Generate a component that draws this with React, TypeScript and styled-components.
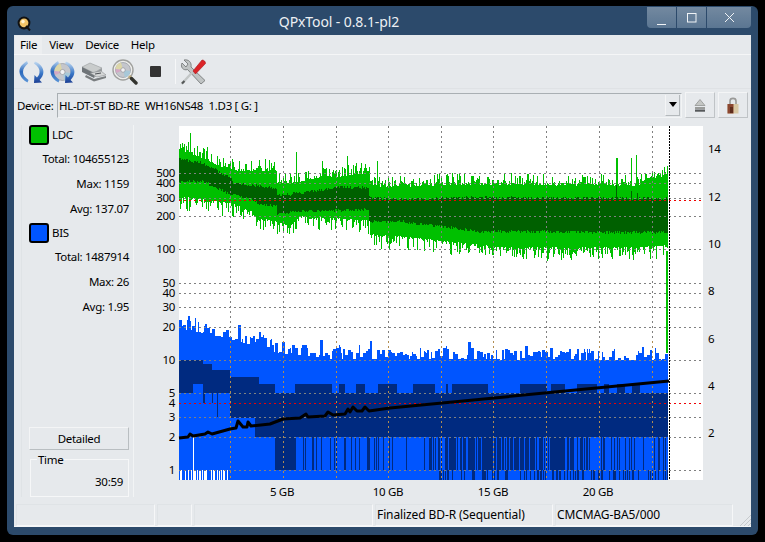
import styled, { createGlobalStyle } from "styled-components";

const GlobalStyle = createGlobalStyle`
  html, body {
    margin: 0;
    padding: 0;
    background: #000;
  }
  #root {
    width: 765px;
    height: 542px;
    overflow: hidden;
  }
`;

const UI_FONT = `"Noto Sans", "Open Sans", "Liberation Sans", sans-serif`;

// seeded random so every photo looks the same
function makeRandom(seed: number) {
  let s = seed;
  return () => {
    s = (s * 16807) % 2147483647;
    return s / 2147483647;
  };
}

type Pt = [number, number];

function lerp(points: Pt[], x: number) {
  for (let i = 1; i < points.length; i++) {
    if (x <= points[i][0]) {
      const [x0, y0] = points[i - 1];
      const [x1, y1] = points[i];
      return y0 + ((y1 - y0) * (x - x0)) / Math.max(x1 - x0, 1);
    }
  }
  return points[points.length - 1][1];
}

const CHART_LEFT = 179;
const CHART_RIGHT = 703;
const CHART_TOP = 125;
const CHART_BOTTOM = 479;
const DATA_END = 668;

const greenTop: Pt[] = [[179, 146], [230, 168], [276, 168], [277, 180], [296, 180], [320, 175], [350, 173], [369, 170], [370, 184], [400, 184], [450, 182], [640, 183], [646, 175], [668, 175]];
const greenBottom: Pt[] = [[179, 196], [230, 203], [250, 210], [257, 218], [276, 221], [290, 226], [296, 216], [369, 220], [370, 234], [400, 236], [500, 247], [640, 247], [668, 245]];
const darkTop: Pt[] = [[179, 159], [203, 164], [230, 178], [233, 183], [276, 189], [277, 196], [296, 194], [336, 188], [368, 188], [369, 198], [400, 200], [480, 198], [668, 199]];
const darkBottom: Pt[] = [[179, 179], [203, 179], [230, 192], [250, 196], [257, 201], [276, 204], [277, 212], [296, 209], [368, 207], [369, 219], [400, 219], [480, 229], [668, 230]];
const blueTop: Pt[] = [[179, 327], [230, 338], [276, 352], [330, 358], [668, 359]];
const burnLine: Pt[] = [[179, 437], [188, 436], [190, 433], [193, 435], [205, 433], [208, 431], [212, 433], [230, 428], [236, 427], [238, 420], [243, 426], [247, 426], [248, 421], [251, 425], [270, 423], [283, 418], [300, 417], [303, 415], [306, 413], [308, 416], [325, 415], [328, 411], [333, 414], [345, 413], [348, 408], [350, 411], [353, 406], [357, 410], [362, 410], [365, 406], [369, 410], [390, 407], [669, 380]];

const ldcSpikes: Pt[] = [[190, 132], [207, 146], [296, 151], [322, 160], [347, 155], [377, 160], [616, 157], [617, 157], [631, 157], [636, 154]];

const leftTicks: { label: string; y: number }[] = [
  { label: "500", y: 172 }, { label: "400", y: 182 }, { label: "300", y: 197 }, { label: "200", y: 215 },
  { label: "100", y: 248 }, { label: "50", y: 282 }, { label: "40", y: 292 }, { label: "30", y: 306 },
  { label: "20", y: 326 }, { label: "10", y: 359 }, { label: "5", y: 392 }, { label: "4", y: 402 },
  { label: "3", y: 416 }, { label: "2", y: 436 }, { label: "1", y: 469 },
];
const rightTicks = [
  { label: "14", y: 148 }, { label: "12", y: 196 }, { label: "10", y: 243 }, { label: "8", y: 290 },
  { label: "6", y: 338 }, { label: "4", y: 385 }, { label: "2", y: 432 },
];
const gridX = [230, 283, 336, 388, 441, 493, 546, 599, 652];
const bottomTicks = [
  { label: "5 GB", x: 282 }, { label: "10 GB", x: 388 }, { label: "15 GB", x: 493 }, { label: "20 GB", x: 598 },
];

function buildChart() {
  const rnd = makeRandom(4711);
  let bright = "";
  let dark = "";
  let blue = "";
  let navy = "";
  let white = "";

  const bar = (x: number, y0: number, y1: number) => `M${x + 0.5} ${Math.round(y0)}V${Math.round(y1)}`;

  let blueHold = 0;
  let blueValue = 0;
  let gapHold = 0;
  let gapOn = false;

  for (let x = CHART_LEFT; x < DATA_END; x++) {
    const gt = lerp(greenTop, x) - Math.pow(rnd(), 2) * 12 + 2;
    const gb = lerp(greenBottom, x) + Math.pow(rnd(), 2.5) * 14 - 1;
    bright += bar(x, gt, gb);
    dark += bar(x, lerp(darkTop, x) - rnd() * 3, lerp(darkBottom, x) + rnd() * 3);

    // histogram look of the BIS tops, bars are 1-3 px wide
    if (blueHold <= 0) {
      blueHold = 1 + Math.floor(rnd() * 3);
      const r = rnd();
      blueValue = lerp(blueTop, x) - (r > 0.22 ? rnd() * 12 : 0) - (r > 0.9 ? 4 + rnd() * 6 : 0);
    }
    blueHold--;
    blue += bar(x, blueValue, CHART_BOTTOM);

    // stepped dark bands of the BIS graph
    if (gapHold <= 0) {
      gapOn = rnd() > 0.65;
      gapHold = 2 + Math.floor(rnd() * 7);
    }
    gapHold--;

    if (x < 203) {
      navy += bar(x, 359, gapOn && x > 192 ? 383 : 392);
    } else if (x < 230) {
      navy += bar(x, x < 212 ? 363 : 369, x === 203 || x === 204 || x === 212 ? 402 : x === 217 ? 416 : 392);
    } else if (x < 255) {
      navy += bar(x, 376, 417);
    } else if (x < 259) {
      navy += bar(x, 376, 436);
    } else if (x < 275) {
      navy += bar(x, 383, 436);
    } else if (x < 295) {
      navy += bar(x, 392, 469);
    } else {
      navy += bar(x, gapOn || x > 640 ? 392 : 383, 436);
    }

    // stripes under the 2 line
    if (x >= 295) {
      const density = x < 430 ? 0.14 : x < 590 ? 0.74 : 0.25;
      if (rnd() < density) navy += bar(x, 436, 469);
      if (x > 430 && rnd() < 0.3) navy += bar(x, 469, 479);
    }

    // white gaps at the very start
    if (x < 228 && rnd() > 0.55) white += bar(x, 469, 479);
  }
  white += bar(193, 436, 479);

  for (const [x, y] of ldcSpikes) bright += bar(x, y, 190);
  dark += bar(616, 184, 200) + bar(631, 190, 200) + bar(637, 192, 200);

  const line = burnLine.map(([x, y], i) => `${i === 0 ? "M" : "L"}${x} ${y}`).join("");

  return { bright, dark, blue, navy, white, line };
}

const chart = buildChart();

function DiscGlyph({ cx, cy, r }: { cx: number; cy: number; r: number }) {
  return (
    <g>
      <circle cx={cx} cy={cy} r={r} fill="#c4c6cc" stroke="#94989f" strokeWidth="0.7" />
      <path d={`M${cx} ${cy}L${cx - r} ${cy - 1}A${r} ${r} 0 0 1 ${cx - 2} ${cy - r}Z`} fill="#dcd6a8" />
      <path d={`M${cx} ${cy}L${cx - r + 1} ${cy + 3}A${r} ${r} 0 0 1 ${cx - r} ${cy - 1}Z`} fill="#d4a8c4" />
      <path d={`M${cx} ${cy}L${cx + r} ${cy + 1}A${r} ${r} 0 0 1 ${cx + 2} ${cy + r}Z`} fill="#a8c8d8" />
      <circle cx={cx} cy={cy} r={r * 0.3} fill="#f2f2f4" stroke="#8a8a90" strokeWidth="0.6" />
    </g>
  );
}

function RefreshArcs() {
  return (
    <>
      <defs>
        <linearGradient id="arcLeft" x1="0" y1="0" x2="0" y2="1">
          <stop offset="0" stopColor="#b4d2f0" />
          <stop offset="0.5" stopColor="#2a68bc" />
          <stop offset="1" stopColor="#5c96d8" />
        </linearGradient>
        <linearGradient id="arcRight" x1="0" y1="0" x2="0" y2="1">
          <stop offset="0" stopColor="#c4dcf2" />
          <stop offset="0.55" stopColor="#3a78c8" />
          <stop offset="1" stopColor="#1c3f94" />
        </linearGradient>
      </defs>
      <path d="M8 1C2.5 4.5 0 8 0.5 12C1 16.5 4 20 8.5 22.5L9.5 20C6 17.5 4 15 4 12C4 8.5 6 6 9 3.5Z" fill="url(#arcLeft)" />
      <path d="M16 1.5L15 3.5C19 6 21 9 20.5 12.5C20.3 14.5 19.4 16 18 17.4L15.5 15L15 23L23 22.5L20.6 20C23 17.5 24.3 15 24.4 12C24.5 7.5 21 3.5 16 1.5Z" fill="url(#arcRight)" />
    </>
  );
}

function RefreshIcon() {
  return (
    <svg width="26" height="24" viewBox="0 0 26 24">
      <RefreshArcs />
    </svg>
  );
}

function DiscRefreshIcon() {
  return (
    <svg width="26" height="24" viewBox="0 0 26 24">
      <DiscGlyph cx={12.5} cy={12} r={8.5} />
      <RefreshArcs />
    </svg>
  );
}

function DriveIcon() {
  return (
    <svg width="26" height="20" viewBox="0 0 26 20">
      <path d="M1 5L9 1L21 6L13 11Z" fill="#c9cccc" stroke="#8a8e90" strokeWidth="0.5" />
      <path d="M1 5L13 11L13 16L1 10Z" fill="#6e7478" />
      <path d="M13 11L21 6L21 9L13 16Z" fill="#9a9ea0" />
      <path d="M9 11L20 9L25 13L16 15Z" fill="#d4d6d6" stroke="#7d8184" strokeWidth="0.5" />
      <path d="M5 13L13 17L25 14L25 16L13 19.5L4 15Z" fill="#7a7e80" />
      <path d="M14 12L20 11" stroke="#4c5054" strokeWidth="1" />
    </svg>
  );
}

function MagnifierIcon() {
  return (
    <svg width="26" height="26" viewBox="0 0 26 26">
      <circle cx="11" cy="11" r="10" fill="#ededeb" stroke="#a0a19e" strokeWidth="1.4" />
      <DiscGlyph cx={11} cy={11} r={7.5} />
      <path d="M17 17L20 20" stroke="#b8a678" strokeWidth="3" />
      <path d="M19.5 19.5L24 24" stroke="#33342f" strokeWidth="3.4" strokeLinecap="round" />
    </svg>
  );
}

function ToolsIcon() {
  return (
    <svg width="26" height="26" viewBox="0 0 26 26">
      <path d="M4 1L8 5L6 8L2 4C0 8 3.5 12 7.5 10.5L21 25L25 21.5L11 8C12 3.5 8.5 0 4 1Z" fill="#c0c4c4" stroke="#6c7070" strokeWidth="0.8" />
      <path d="M1.5 25L13.5 12" stroke="#c2c6c6" strokeWidth="2.4" />
      <path d="M2 24.5L4.5 22" stroke="#555858" strokeWidth="2.2" />
      <path d="M13 12L15.5 15L25.5 4.5C25.5 2.5 24 1 22 1Z" fill="#dc2428" stroke="#a81418" strokeWidth="0.6" />
    </svg>
  );
}

function EjectIcon() {
  return (
    <svg width="12" height="13" viewBox="0 0 12 13">
      <path d="M6 0.5L11 6.5L1 6.5Z" fill="#c4c6c4" stroke="#8a8c8a" strokeWidth="0.7" />
      <rect x="1" y="8" width="10" height="2" fill="#9a9c9a" />
      <rect x="1" y="10.5" width="10" height="2.2" fill="#55585a" />
    </svg>
  );
}

function LockIcon() {
  return (
    <svg width="12" height="17" viewBox="0 0 12 17">
      <path d="M3 7V4C3 0.5 9 0.5 9 4V7" fill="none" stroke="#9a9a98" strokeWidth="1.6" />
      <rect x="0.5" y="7" width="11" height="9.5" fill="#d8c8a4" />
      <rect x="0.5" y="7" width="6" height="9.5" fill="#8a4630" />
      <rect x="3" y="10" width="3" height="6" fill="#5e2c1c" />
    </svg>
  );
}

function App() {
  return (
    <>
      <GlobalStyle />
      <Desktop>
        <Window>
          <TitleBar>
            <AppIcon viewBox="0 0 14 15">
              <circle cx="7" cy="7" r="6.4" fill="#111" />
              <circle cx="7" cy="6.8" r="4.4" fill="#f2c468" />
              <circle cx="6" cy="5.6" r="1.8" fill="#fff3d0" />
              <path d="M9 10L13 14.5" stroke="#111" strokeWidth="2" />
            </AppIcon>
            <Title>QPxTool - 0.8.1-pl2</Title>
            <WindowButtons>
              <WindowButton $width={29}>
                <svg width="11" height="14" viewBox="0 0 11 14"><path d="M1 13.5H10" stroke="#f0f3f6" /></svg>
              </WindowButton>
              <WindowButton $width={29}>
                <svg width="10" height="10" viewBox="0 0 10 10"><rect x="0.5" y="0.5" width="8.5" height="8.5" fill="none" stroke="#f0f3f6" /></svg>
              </WindowButton>
              <WindowButton $width={44}>
                <svg width="11" height="11" viewBox="0 0 11 11"><path d="M1 1L10 10M10 1L1 10" stroke="#f0f3f6" /></svg>
              </WindowButton>
            </WindowButtons>
          </TitleBar>

          <Client>
            <MenuBar>
              <MenuItem $hot>File</MenuItem>
              <MenuItem>View</MenuItem>
              <MenuItem>Device</MenuItem>
              <MenuItem>Help</MenuItem>
            </MenuBar>

            <ToolBar>
              <ToolButton><RefreshIcon /></ToolButton>
              <ToolButton><DiscRefreshIcon /></ToolButton>
              <ToolButton><DriveIcon /></ToolButton>
              <ToolButton><MagnifierIcon /></ToolButton>
              <ToolButton><StopSquare /></ToolButton>
              <ToolSeparator />
              <ToolButton><ToolsIcon /></ToolButton>
            </ToolBar>

            <DeviceRow>
              <DeviceLabel>Device:</DeviceLabel>
              <DeviceCombo>
                <ComboText>HL-DT-ST BD-RE&nbsp; WH16NS48&nbsp; 1.D3 [ G: ]</ComboText>
                <ComboArrow><ArrowDown /></ComboArrow>
              </DeviceCombo>
              <SquareButton><EjectIcon /></SquareButton>
              <SquareButton><LockIcon /></SquareButton>
            </DeviceRow>

            <MainArea>
              <SidePanel>
                <LegendRow>
                  <Swatch $color="#00c000" />
                  <span>LDC</span>
                </LegendRow>
                <StatRow $first>Total: 104655123</StatRow>
                <StatRow>Max: 1159</StatRow>
                <StatRow>Avg: 137.07</StatRow>
                <LegendRow $second>
                  <Swatch $color="#0055ff" />
                  <span>BIS</span>
                </LegendRow>
                <StatRow $first>Total: 1487914</StatRow>
                <StatRow>Max: 26</StatRow>
                <StatRow>Avg: 1.95</StatRow>
                <PanelSpacer />
                <DetailedButton>Detailed</DetailedButton>
                <TimeBox>
                  <TimeLegend>Time</TimeLegend>
                  <TimeValue>30:59</TimeValue>
                </TimeBox>
              </SidePanel>

              <ChartSvg viewBox="136 124 600 376" width="600" height="376">
                <rect x={CHART_LEFT} y={CHART_TOP} width={CHART_RIGHT - CHART_LEFT} height={CHART_BOTTOM - CHART_TOP} fill="#fff" />
                <g shapeRendering="crispEdges" strokeWidth="1" fill="none">
                  <path d={chart.bright} stroke="#00c000" />
                  <path d={chart.dark} stroke="#006000" />
                  <path d={chart.blue} stroke="#0055ff" />
                  <path d={chart.navy} stroke="#002a80" />
                  <path d={chart.white} stroke="#fff" />
                  <path d={`M${DATA_END - 1.5} 250V352`} stroke="#00c000" strokeWidth="2" />
                  {leftTicks.filter((t) => t.y !== 402).map((t) => (
                    <path key={t.label} d={`M${CHART_LEFT} ${t.y + 0.5}H${CHART_RIGHT}`} stroke="#808080" strokeDasharray="2 3" />
                  ))}
                  {gridX.map((x) => (
                    <g key={x}>
                      <path d={`M${x + 0.5} ${CHART_TOP}V340`} stroke="#808080" strokeDasharray="2 3" />
                      <path d={`M${x + 0.5} 340V${CHART_BOTTOM}`} stroke="#b08c50" strokeDasharray="2 3" />
                    </g>
                  ))}
                  <path d={`M${CHART_LEFT} 199.5H${CHART_RIGHT}`} stroke="#f00000" strokeDasharray="2 3" />
                  <path d={`M${CHART_LEFT} 402.5H${CHART_RIGHT}`} stroke="#f00000" strokeDasharray="2 3" />
                  <path d={`M${DATA_END + 1.5} ${CHART_TOP}V${CHART_BOTTOM}`} stroke="#000" strokeDasharray="2 1" />
                </g>
                <path d={chart.line} fill="none" stroke="#000" strokeWidth="3" strokeLinejoin="round" />
                {leftTicks.map((t) => (
                  <AxisText key={t.label} x={175} y={t.y + 4} textAnchor="end">{t.label}</AxisText>
                ))}
                {rightTicks.map((t) => (
                  <AxisText key={t.label} x={708} y={t.y + 4}>{t.label}</AxisText>
                ))}
                {bottomTicks.map((t) => (
                  <AxisText key={t.label} x={t.x} y={495} textAnchor="middle">{t.label}</AxisText>
                ))}
              </ChartSvg>
            </MainArea>

            <StatusBar>
              <StatusCell $width={139} />
              <StatusCell $width={35} />
              <StatusCell $width={179} />
              <StatusCell $width={178}>Finalized BD-R (Sequential)</StatusCell>
              <StatusCell $width={178}>CMCMAG-BA5/000</StatusCell>
              <Grip viewBox="0 0 12 12" width="12" height="12">
                <path d="M12 1L1 12M12 5L5 12M12 9L9 12" stroke="#c6cacd" strokeWidth="1" />
              </Grip>
            </StatusBar>
          </Client>
        </Window>
      </Desktop>
    </>
  );
}

export default App;

const Desktop = styled.div`
  width: 765px;
  height: 542px;
  background: #000;
  padding: 6px 7px 7px 7px;
  box-sizing: border-box;
`;

const Window = styled.div`
  height: 100%;
  display: flex;
  flex-direction: column;
  background: #2c4a6b;
  border-radius: 6px;
  padding: 0 7px 8px 7px;
  box-sizing: border-box;
  font-family: ${UI_FONT};
  font-size: 11.5px;
  letter-spacing: -0.3px;
  color: #000;
`;

// title bar
const TitleBar = styled.div`
  position: relative;
  height: 29px;
  flex: none;
  display: flex;
  align-items: flex-start;
`;

const AppIcon = styled.svg`
  width: 14px;
  height: 15px;
  margin: 10px 0 0 3px;
  flex: none;
`;

const Title = styled.div`
  flex: 1;
  text-align: center;
  color: #ecf0f4;
  font-size: 14px;
  letter-spacing: -0.1px;
  line-height: 18px;
  margin-top: 7px;
  padding-right: 104px;
`;

const WindowButtons = styled.div`
  position: absolute;
  top: 1px;
  right: 0;
  display: flex;
  height: 21px;
  gap: 1px;
  background: #2c4a6b;
  border-radius: 0 0 4px 4px;
  overflow: hidden;
`;

const WindowButton = styled.div<{ $width: number }>`
  width: ${(p) => p.$width}px;
  display: flex;
  align-items: center;
  justify-content: center;
  background: linear-gradient(#7389a0, #5b7692);
`;

// client area
const Client = styled.div`
  flex: 1;
  min-height: 0;
  display: flex;
  flex-direction: column;
  background: #e6e9ec;
  border-bottom: 1px solid #f6f7f8;
`;

const MenuBar = styled.div`
  height: 19px;
  flex: none;
  display: flex;
  align-items: center;
  border-bottom: 1px solid #f5f6f7;
  padding-left: 1px;
  box-sizing: content-box;
`;

const MenuItem = styled.div<{ $hot?: boolean }>`
  height: 18px;
  line-height: 18px;
  padding: 0 5px 0 5px;
  margin-right: 2px;
  background: ${(p) => (p.$hot ? "#eceef0" : "transparent")};
`;

const ToolBar = styled.div`
  height: 33px;
  flex: none;
  display: flex;
  align-items: center;
  padding-left: 2px;
  border-bottom: 1px solid #dfe2e5;
`;

const ToolButton = styled.div`
  width: 31px;
  height: 28px;
  display: flex;
  align-items: center;
  justify-content: center;
`;

const StopSquare = styled.div`
  width: 11px;
  height: 11px;
  background: #333;
  border-radius: 1px;
`;

const ToolSeparator = styled.div`
  width: 1px;
  height: 25px;
  margin: 0 1px 0 4px;
  background: #f6f7f8;
`;

const DeviceRow = styled.div`
  height: 29px;
  flex: none;
  display: flex;
  align-items: center;
  padding: 3px 3px 0 3px;
  box-sizing: border-box;
`;

const DeviceLabel = styled.div`
  width: 40px;
  flex: none;
`;

const DeviceCombo = styled.div`
  flex: 1;
  height: 25px;
  display: flex;
  align-items: center;
  justify-content: space-between;
  box-sizing: border-box;
  border: 1px solid #a9afb3;
  border-right-color: #f2f4f5;
  border-bottom-color: #f2f4f5;
  padding: 0 1px 0 1px;
`;

const ComboText = styled.div`
  white-space: nowrap;
`;

const ComboArrow = styled.div`
  width: 15px;
  height: 21px;
  box-sizing: border-box;
  border-right: 1px solid #b4b9bc;
  border-bottom: 1px solid #b4b9bc;
  border-left: 1px solid #f4f5f6;
  display: flex;
  align-items: center;
  justify-content: center;
`;

const ArrowDown = styled.div`
  width: 0;
  height: 0;
  border-left: 4px solid transparent;
  border-right: 4px solid transparent;
  border-top: 5px solid #000;
`;

const SquareButton = styled.div`
  width: 30px;
  height: 26px;
  margin-left: 3px;
  flex: none;
  display: flex;
  align-items: center;
  justify-content: center;
  box-sizing: border-box;
  border: 1px solid #f4f5f6;
  border-right-color: #bfc3c6;
  border-bottom-color: #bfc3c6;
`;

const MainArea = styled.div`
  flex: 1;
  min-height: 0;
  display: flex;
  align-items: flex-start;
  padding: 7px 0 0 7px;
`;

const SidePanel = styled.div`
  width: 113px;
  height: 372px;
  flex: none;
  box-sizing: border-box;
  border-left: 1px solid #dfe3e6;
  border-right: 1px solid #f2f4f5;
  padding: 0 4px 0 7px;
  display: flex;
  flex-direction: column;
`;

const LegendRow = styled.div<{ $second?: boolean }>`
  height: 20px;
  flex: none;
  display: flex;
  align-items: center;
  gap: 3px;
  margin-top: ${(p) => (p.$second ? "2px" : "0")};
  line-height: 18px;
`;

const Swatch = styled.div<{ $color: string }>`
  width: 20px;
  height: 20px;
  box-sizing: border-box;
  border: 2px solid #000;
  border-radius: 3px;
  background: ${(p) => p.$color};
`;

const StatRow = styled.div<{ $first?: boolean }>`
  height: 25px;
  line-height: 25px;
  flex: none;
  text-align: right;
  margin-top: ${(p) => (p.$first ? "1px" : "0")};
`;

const PanelSpacer = styled.div`
  flex: 1;
`;

const DetailedButton = styled.div`
  height: 23px;
  flex: none;
  line-height: 21px;
  text-align: center;
  box-sizing: border-box;
  border: 1px solid #f4f5f6;
  border-right-color: #b9bec1;
  border-bottom-color: #b9bec1;
`;

const TimeBox = styled.div`
  position: relative;
  height: 38px;
  flex: none;
  margin: 9px 0 0 1px;
  box-sizing: border-box;
  border: 1px solid #f6f7f8;
  display: flex;
  align-items: flex-end;
  justify-content: flex-end;
  padding: 0 5px 6px 0;
`;

const TimeLegend = styled.span`
  position: absolute;
  top: -7px;
  left: 6px;
  padding: 0 1px;
  line-height: 14px;
  background: #e6e9ec;
`;

const TimeValue = styled.span`
  line-height: 16px;
`;

const ChartSvg = styled.svg`
  display: block;
  flex: none;
  margin: 0 0 0 2px;
`;

const AxisText = styled.text`
  font-family: ${UI_FONT};
  font-size: 11.5px;
  fill: #000;
`;

const StatusBar = styled.div`
  height: 22px;
  flex: none;
  display: flex;
  align-items: stretch;
  gap: 2px;
  padding-left: 2px;
  position: relative;
`;

const StatusCell = styled.div<{ $width: number }>`
  width: ${(p) => p.$width}px;
  flex: none;
  box-sizing: border-box;
  border: 1px solid #dfe3e6;
  border-right-color: #f6f7f8;
  border-bottom-color: #f6f7f8;
  padding-left: 1px;
  line-height: 20px;
  font-size: 12px;
  letter-spacing: -0.1px;
`;

const Grip = styled.svg`
  position: absolute;
  right: 0;
  bottom: 0;
`;
